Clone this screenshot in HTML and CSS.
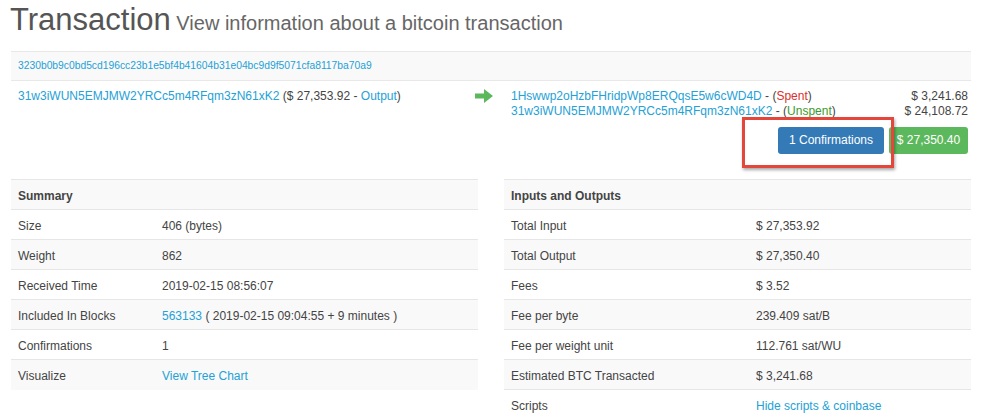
FILE: index.html
```html
<!DOCTYPE html>
<html>
<head>
<meta charset="utf-8">
<link rel="stylesheet" href="styles.css">
</head>
<body>
<div class="page">
  <h1 class="title">Transaction<small> View information about a bitcoin transaction</small></h1>

  <div class="tx">
    <div class="tx-hash"><a href="#">3230b0b9c0bd5cd196cc23b1e5bf4b41604b31e04bc9d9f5071cfa8117ba70a9</a></div>
    <div class="tx-body">
      <div class="tx-in"><a href="#">31w3iWUN5EMJMW2YRCc5m4RFqm3zN61xK2</a> ($ 27,353.92 - <a href="#">Output</a>)</div>
      <div class="tx-arrow">
        <svg width="18" height="14" viewBox="0 0 18 14"><path d="M0 4.5h9V0l9 7-9 7V9.5H0z" fill="#5cb85c"/></svg>
      </div>
      <div class="tx-out">
        <div class="out-row"><span><a href="#">1Hswwp2oHzbFHridpWp8ERQqsE5w6cWD4D</a> - (<span class="spent">Spent</span>)</span><span>$ 3,241.68</span></div>
        <div class="out-row"><span><a href="#">31w3iWUN5EMJMW2YRCc5m4RFqm3zN61xK2</a> - (<span class="unspent">Unspent</span>)</span><span>$ 24,108.72</span></div>
        <div class="btns">
          <span class="btn btn-blue">1 Confirmations</span>
          <span class="btn btn-green">$ 27,350.40</span>
          <span class="highlight"></span>
        </div>
      </div>
    </div>
  </div>

  <div class="tables">
    <table class="tbl tbl-left">
      <tr><th colspan="2">Summary</th></tr>
      <tr><td class="k">Size</td><td>406 (bytes)</td></tr>
      <tr><td class="k">Weight</td><td>862</td></tr>
      <tr><td class="k">Received Time</td><td>2019-02-15 08:56:07</td></tr>
      <tr><td class="k">Included In Blocks</td><td><a href="#">563133</a> ( 2019-02-15 09:04:55 + 9 minutes )</td></tr>
      <tr><td class="k">Confirmations</td><td>1</td></tr>
      <tr><td class="k">Visualize</td><td><a href="#">View Tree Chart</a></td></tr>
    </table>
    <table class="tbl tbl-right">
      <tr><th colspan="2">Inputs and Outputs</th></tr>
      <tr><td class="k">Total Input</td><td>$ 27,353.92</td></tr>
      <tr><td class="k">Total Output</td><td>$ 27,350.40</td></tr>
      <tr><td class="k">Fees</td><td>$ 3.52</td></tr>
      <tr><td class="k">Fee per byte</td><td>239.409 sat/B</td></tr>
      <tr><td class="k">Fee per weight unit</td><td>112.761 sat/WU</td></tr>
      <tr><td class="k">Estimated BTC Transacted</td><td>$ 3,241.68</td></tr>
      <tr><td class="k">Scripts</td><td><a href="#">Hide scripts &amp; coinbase</a></td></tr>
    </table>
  </div>
</div>
</body>
</html>
```

FILE: styles.css
```css
html, body {
  margin: 0;
  padding: 0;
  background: #fff;
}
body {
  font-family: "Liberation Sans", Arial, sans-serif;
  font-size: 12px;
  color: #444;
}
a {
  color: #24a1d6;
  text-decoration: none;
}
.page {
  width: 960px;
  padding-left: 11px;
}
.title {
  margin: 0 0 0 -1px;
  padding-top: 3px;
  height: 48px;
  font-size: 31px;
  font-weight: normal;
  color: #555;
  line-height: 34px;
}
.title small {
  font-size: 20px;
  color: #666;
}
.tx {
  border-top: 1px solid #e8e8e8;
}
.tx-hash {
  background: #f9f9f9;
  height: 28px;
  line-height: 28px;
  padding-left: 7px;
  font-size: 10.3px;
  border-bottom: 1px solid #e8e8e8;
}
.tx-body {
  display: flex;
  padding-top: 8px;
  height: 90px;
}
.tx-in {
  width: 455px;
  padding-left: 7px;
  line-height: 15px;
}
.tx-arrow {
  width: 36px;
  padding-left: 2px;
}
.tx-out {
  width: 459px;
}
.out-row {
  display: flex;
  justify-content: space-between;
  line-height: 15px;
  padding-right: 2px;
}
.spent { color: #d9302c; }
.unspent { color: #3c9a2c; }
.btns {
  position: relative;
  display: flex;
  justify-content: flex-end;
  gap: 5px;
  margin-top: 8px;
  padding-right: 2px;
}
.btn {
  display: inline-block;
  box-sizing: border-box;
  height: 27px;
  line-height: 27px;
  border-radius: 3px;
  color: #fff;
  font-size: 12px;
  white-space: nowrap;
  text-align: center;
}
.btn-blue {
  background: #337ab7;
  width: 106px;
}
.btn-green {
  background: #5cb85c;
  width: 79px;
}
.highlight {
  position: absolute;
  left: 231px;
  top: -10px;
  width: 146px;
  height: 45px;
  border: 3px solid #e5463b;
  box-shadow: 1px 2px 3px rgba(0, 0, 0, 0.35);
}
.tables {
  display: flex;
  align-items: flex-start;
  justify-content: space-between;
}
.tbl {
  border-collapse: collapse;
  border-top: 1px solid #e6e6e6;
}
.tbl-left { width: 467px; }
.tbl-right { width: 467px; }
.tbl th,
.tbl td {
  box-sizing: border-box;
  height: 30px;
  padding: 3px 7px 0;
  text-align: left;
  vertical-align: middle;
  border-bottom: 1px solid #e6e6e6;
  font-size: 12px;
  line-height: 15px;
}
.tbl th {
  font-weight: bold;
  color: #444;
}
.tbl tr:nth-child(odd) {
  background: #f9f9f9;
}
.tbl-left .k { width: 144px; }
.tbl-right .k { width: 245px; }
.tbl tr:last-child td {
  border-bottom: none;
}
```
